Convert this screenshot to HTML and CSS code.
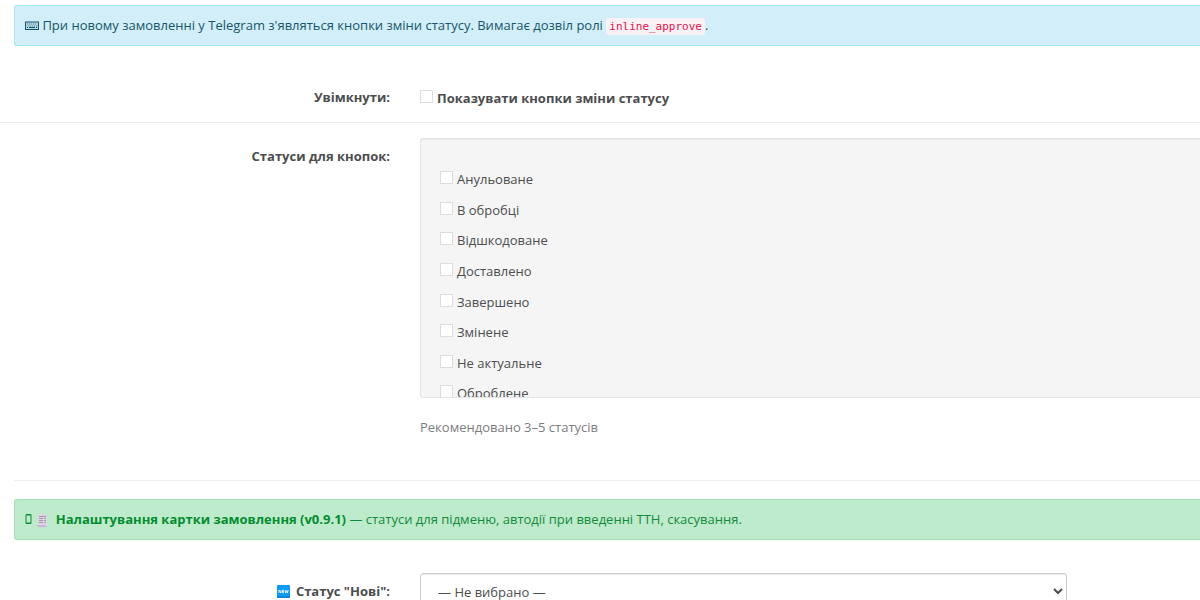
FILE: index.html
```html
<!DOCTYPE html>
<html lang="uk">
<head>
  <meta charset="UTF-8">
  <title>Кнопки зміни статусу</title>
  <link rel="stylesheet" href="styles.css">
</head>
<body>
  <form class="settings">
    <div class="alert alert-info">
      <svg class="icon icon-keyboard" viewBox="0 0 14 9" aria-hidden="true">
        <rect x="0.5" y="1" width="13" height="7.500" fill="#b4d6e2" stroke="#17566a"/>
        <path d="M2 3h10M3 5h9" stroke="#4a8495" stroke-dasharray="1 1"/>
        <path d="M2 6.500h1M4 6.500h6M11 6.500h1" stroke="#17566a"/>
      </svg>
      При новому замовленні у Telegram з'являться кнопки зміни статусу. Вимагає дозвіл ролі <code>inline_approve</code>.
    </div>

    <div class="form-group">
      <label class="control-label" for="enabled">Увімкнути:</label>
      <div class="control">
        <label class="check check-main"><input type="checkbox" id="enabled">Показувати кнопки зміни статусу</label>
      </div>
    </div>

    <div class="form-group form-group-bordered">
      <span class="control-label" id="statusesLabel">Статуси для кнопок:</span>
      <div class="control control-wide">
        <div class="well" role="group" aria-labelledby="statusesLabel">
          <div class="status-list">
            <label class="check"><input type="checkbox" name="status">Анульоване</label>
            <label class="check"><input type="checkbox" name="status">В обробці</label>
            <label class="check"><input type="checkbox" name="status">Відшкодоване</label>
            <label class="check"><input type="checkbox" name="status">Доставлено</label>
            <label class="check"><input type="checkbox" name="status">Завершено</label>
            <label class="check"><input type="checkbox" name="status">Змінене</label>
            <label class="check"><input type="checkbox" name="status">Не актуальне</label>
            <label class="check"><input type="checkbox" name="status">Оброблене</label>
          </div>
        </div>
        <p class="help-block">Рекомендовано 3–5 статусів</p>
      </div>
    </div>

    <hr>

    <div class="alert alert-success">
      <svg class="icon icon-phone" viewBox="0 0 7 10" aria-hidden="true">
        <path d="M1 0.5h5v9h-5z" fill="none" stroke="#128a3c"/>
        <path d="M1 1.5h5M1 8.5h5" stroke="#128a3c" stroke-opacity=".5"/>
      </svg>
      <svg class="icon icon-receipt" viewBox="0 0 11 13" aria-hidden="true">
        <path d="M1 0h9v12H1z" fill="#dcd6e2"/>
        <path d="M0 11h8l2 2H1z" fill="#cdb4dc"/>
        <path d="M2 2.5h7M2 4.500h4M7 4.500h2M2 6.500h4M7 6.500h2M2 8.500h4M7 8.500h2" stroke="#a298ae"/>
      </svg>
      <strong>Налаштування картки замовлення (v0.9.1)</strong> — статуси для підменю, автодії при введенні ТТН, скасування.
    </div>

    <div class="form-group form-group-select">
      <label class="control-label" for="statusNew">
        <svg class="icon icon-new" viewBox="0 0 13 13" aria-hidden="true">
          <rect width="13" height="13" rx="1" fill="#0c9cf6"/>
          <path d="M0 11h13v1a1 1 0 0 1-1 1H1a1 1 0 0 1-1-1z" fill="#0b86dc"/>
          <path d="M2 8V5l2 3V5M7 5.300H5.500v2.400H7M5.500 6.500H7M8 5l.8 3 .8-2.500.8 2.500.8-3" fill="none" stroke="#fff" stroke-width=".8"/>
        </svg>
        Статус "Нові":
      </label>
      <div class="control">
        <select class="form-control" id="statusNew">
          <option>— Не вибрано —</option>
        </select>
      </div>
    </div>
  </form>
</body>
</html>
```
FILE: styles.css
```css
* {
  box-sizing: border-box;
}

body {
  margin: 0;
  background: #fff;
  color: #4c4d4f;
  font-family: "Open Sans", "Noto Sans", sans-serif;
  font-size: 13px;
  line-height: 19px;
}

.settings {
  height: 100vh;
  padding-top: 5px;
  overflow: hidden;
}

.alert {
  margin-left: 14px;
  padding: 10px;
  border: 1px solid;
  border-right: 0;
  border-radius: 3px 0 0 3px;
}

.alert-info {
  background: #d2eef8;
  border-color: #a6e8f0;
  color: #17566a;
}

.alert-success {
  background: #beebcc;
  border-color: #a3dfb5;
  color: #128a3c;
}

.alert-success strong {
  color: #048c30;
}

code {
  padding: 2px 3px;
  border-radius: 3px;
  background: #f9f2f4;
  color: #e0134f;
  font-family: Consolas, "DejaVu Sans Mono", "Liberation Mono", monospace;
  font-size: 11px;
  line-height: 15px;
}

.icon {
  display: inline-block;
}

.icon-keyboard {
  width: 14px;
  height: 9px;
}

.icon-phone {
  width: 7px;
  height: 10px;
}

.icon-receipt {
  width: 11px;
  height: 13px;
  margin: 0 4px 0 2px;
  vertical-align: -3px;
}

.icon-new {
  width: 13px;
  height: 13px;
  margin-right: 3px;
  vertical-align: -2px;
}

.form-group {
  display: grid;
  grid-template-columns: 27fr 53fr;
  padding: 15px 0 14px;
}

.alert + .form-group {
  padding-top: 33px;
}

.form-group-bordered {
  padding-bottom: 15px;
  border-top: 1px solid #ededed;
}

.control-label {
  padding: 9px 15px 0;
  font-weight: bold;
  text-align: right;
}

.control {
  padding: 0 15px;
}

.control-wide {
  padding-right: 0;
}

.check {
  display: flex;
  align-items: flex-start;
  gap: 4px;
}

.check-main {
  padding: 10px 0 0;
  font-weight: bold;
}

input[type="checkbox"] {
  appearance: none;
  width: 13px;
  height: 13px;
  margin: 1px 0 0;
  border: 1px solid #ddd;
  background: #fff;
}

input[type="checkbox"]:checked {
  background: #1e91cf;
}

.well {
  height: 260px;
  padding: 31px 19px 0;
  overflow: hidden;
  border: 1px solid #e3e3e3;
  border-right: 0;
  border-radius: 3px 0 0 3px;
  background: #f5f5f5;
  box-shadow: inset 0 1px 1px rgba(0, 0, 0, 0.05);
}

.status-list {
  display: grid;
  grid-auto-rows: 1fr;
  height: 245px;
}

.help-block {
  margin: 20px 0 10px;
  color: #7b7c7e;
}

hr {
  margin: 18px 0 18px 14px;
  border: 0;
  border-top: 1px solid #eee;
}

.form-control {
  width: 100%;
  max-width: 647px;
  height: 37px;
  padding: 8px 13px;
  border: 1px solid #ccc;
  border-radius: 3px;
  background: #fff;
  box-shadow: inset 0 1px 1px rgba(0, 0, 0, 0.08);
  color: #4c4d4f;
  font: inherit;
}
```
